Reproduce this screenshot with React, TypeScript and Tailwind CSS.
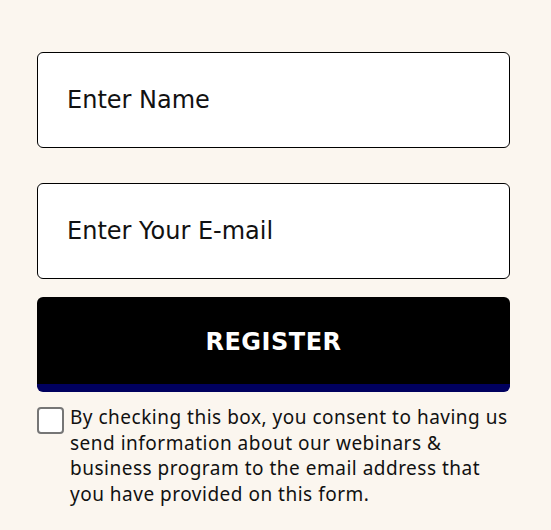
export default function App() {
  return (
    <div className="min-h-[530px] w-[551px] bg-[#fbf6ef] pt-[52px] pl-[37px] font-['Noto_Sans',sans-serif]">
      <div className="flex w-[473px] flex-col">
        <div className="flex h-[96px] items-center rounded-[6px] border border-black bg-white pl-[29px] font-['DejaVu_Sans',sans-serif] text-[24px] text-[#111]">
          Enter Name
        </div>
        <div className="mt-[35px] flex h-[96px] items-center rounded-[6px] border border-black bg-white pl-[29px] font-['DejaVu_Sans',sans-serif] text-[24px] text-[#111]">
          Enter Your E-mail
        </div>
        <button className="mt-[18px] flex h-[95px] items-center justify-center rounded-[6px] border-b-[8px] border-[#00005e] bg-black pt-[2px] font-['DejaVu_Sans',sans-serif] text-[24px] font-bold tracking-[0.5px] text-white">
          REGISTER
        </button>
        <div className="mt-[13px] flex items-start gap-[6px]">
          <div className="mt-[2px] h-[27px] w-[27px] shrink-0 rounded-[4px] border-2 border-[#767676] bg-white" />
          <p className="text-[19px] leading-[25.5px] tracking-[0.5px] text-[#111]">
            By checking this box, you consent to having us send information about our webinars &amp; business program to the email address that you have provided on this form.
          </p>
        </div>
      </div>
    </div>
  );
}
